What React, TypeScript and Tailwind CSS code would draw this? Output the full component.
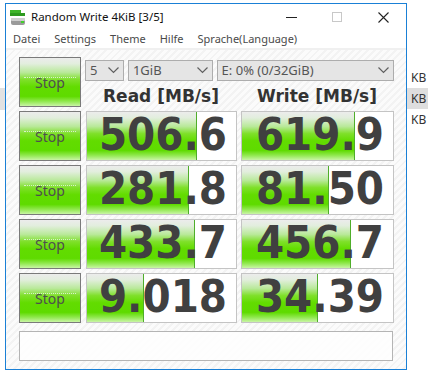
import React from "react"

const rows = [
  { read: "506.6", write: "619.9", rw: 110, ww: 113 },
  { read: "281.8", write: "81.50", rw: 102, ww: 87 },
  { read: "433.7", write: "456.7", rw: 108, ww: 109 },
  { read: "9.018", write: "34.39", rw: 57, ww: 76 },
]

const green =
  "bg-[linear-gradient(to_bottom,#ececec_0%,#e2eedd_12%,#b9e99a_30%,#7fe02a_45%,#62dc00_60%,#5fdb00_80%,#8fe84c_90%,#c9f5a6_100%)]"

function Chevron() {
  return (
    <svg width="11" height="7" viewBox="0 0 11 7" className="shrink-0">
      <path d="M0.5 0.5 L5.5 5.5 L10.5 0.5" fill="none" stroke="#606060" strokeWidth="1.2" />
    </svg>
  )
}

function Select({ w, label }: { w: string; label: string }) {
  return (
    <div className={`${w} h-[21px] flex items-center justify-between pl-[4px] pr-[4px] bg-[#e5e5e5] border border-[#adadad] text-[13px] text-[#555] leading-none`}>
      <span>{label}</span>
      <Chevron />
    </div>
  )
}

function StopButton() {
  return (
    <div className={`relative h-[50px] border border-[#7a7a7a] ${green} flex items-center justify-center`}>
      <div className="absolute left-[4px] right-[4px] top-[19px] border-t border-dotted border-[#d6f0c8]" />
      <span className="relative text-[14px] text-[#4e4e4e] font-['Noto_Sans',sans-serif]">Stop</span>
    </div>
  )
}

function ValueBox({ value, bar }: { value: string; bar: number }) {
  return (
    <div className="relative h-[50px] bg-white border border-[#c4c4c4] flex items-center justify-end pr-[9px]">
      <div
        className={`absolute left-0 top-0 bottom-0 ${green} border-r border-[#4fae2a]`}
        style={{ width: bar }}
      />
      <span className="relative -mt-[3px] text-[45px] font-bold text-[#404040] leading-[48px] font-['DejaVu_Sans_Condensed','DejaVu_Sans',sans-serif]">
        {value}
      </span>
    </div>
  )
}

function DriveIcon() {
  return (
    <svg width="17" height="17" viewBox="0 0 17 17">
      <rect x="1" y="1" width="11" height="3" fill="#3fb52a" />
      <rect x="1" y="4" width="15" height="3" fill="#2e9a1f" />
      <rect x="2" y="9" width="14" height="7" rx="2" fill="#9a9a9a" />
      <rect x="2" y="9" width="14" height="3" rx="1" fill="#cfcfcf" />
      <rect x="12" y="12" width="3" height="2" fill="#3fd02a" />
    </svg>
  )
}

export default function App() {
  return (
    <div className="w-[435px] h-[381px] bg-white overflow-hidden flex font-['Noto_Sans',sans-serif]">
      {/* desktop strip on the left */}
      <div className="w-[5px] pt-[88px]">
        <div className="h-[22px] bg-[#e2e2e2]" />
      </div>

      {/* window */}
      <div className="mt-[3px] w-[402px] h-[367px] border border-[#1a80d6] bg-white flex flex-col">
        {/* title bar */}
        <div className="h-[26px] flex items-center pl-[3px] shrink-0">
          <DriveIcon />
          <span className="ml-[5px] text-[11.5px] text-[#111]">Random Write 4KiB [3/5]</span>
          <div className="ml-auto flex items-center h-full">
            <div className="w-[46px] h-full flex items-center justify-center">
              <div className="w-[11px] border-t border-[#222]" />
            </div>
            <div className="w-[46px] h-full flex items-center justify-center">
              <div className="w-[10px] h-[10px] border border-[#c8c8c8]" />
            </div>
            <div className="w-[46px] h-full flex items-center justify-center">
              <svg width="11" height="11" viewBox="0 0 11 11">
                <path d="M0.5 0.5 L10.5 10.5 M10.5 0.5 L0.5 10.5" stroke="#222" strokeWidth="1.1" />
              </svg>
            </div>
          </div>
        </div>

        {/* menu */}
        <div className="h-[18px] flex items-center gap-[14px] pl-[7px] text-[11px] text-[#4a4a4a] shrink-0">
          <span>Datei</span>
          <span>Settings</span>
          <span>Theme</span>
          <span>Hilfe</span>
          <span>Sprache(Language)</span>
        </div>

        {/* client */}
        <div className="flex-1 border-t-2 border-[#f0f0f0] bg-[repeating-linear-gradient(135deg,#f3f3f3_0px,#f3f3f3_2px,#fbfbfb_2px,#fbfbfb_5px)] pl-[13px] pt-[7px] flex flex-col gap-[4px]">
          <div className="grid grid-cols-[62px_151px_152px] gap-x-[5px]">
            <StopButton />
            <div className="col-span-2 flex flex-col -ml-[1px]">
              <div className="mt-[3px] flex gap-[4px]">
                <Select w="w-[39px]" label="5" />
                <Select w="w-[85px]" label="1GiB" />
                <Select w="w-[178px]" label="E: 0% (0/32GiB)" />
              </div>
              <div className="mt-[7px] flex text-[17px] font-bold text-[#333] leading-none font-['DejaVu_Sans',sans-serif]">
                <div className="w-[152px] text-center">Read [MB/s]</div>
                <div className="ml-[4px] w-[152px] text-center">Write [MB/s]</div>
              </div>
            </div>
          </div>

          {rows.map((r) => (
            <div key={r.read} className="grid grid-cols-[62px_151px_152px] gap-x-[5px]">
              <StopButton />
              <ValueBox value={r.read} bar={r.rw} />
              <div className="-ml-[1px]">
                <ValueBox value={r.write} bar={r.ww} />
              </div>
            </div>
          ))}

          <div className="mt-[4px] w-[374px] h-[30px] bg-white/80 border border-[#b4b4b4]" />
        </div>
      </div>

      {/* desktop list on the right */}
      <div className="flex-1 pt-[67px] flex flex-col text-[12px] text-[#333]">
        <div className="h-[21px] pl-[4px] flex items-center">KB</div>
        <div className="h-[21px] pl-[4px] flex items-center bg-[#dedede] w-[21px]">KB</div>
        <div className="h-[21px] pl-[4px] flex items-center">KB</div>
      </div>
    </div>
  )
}
